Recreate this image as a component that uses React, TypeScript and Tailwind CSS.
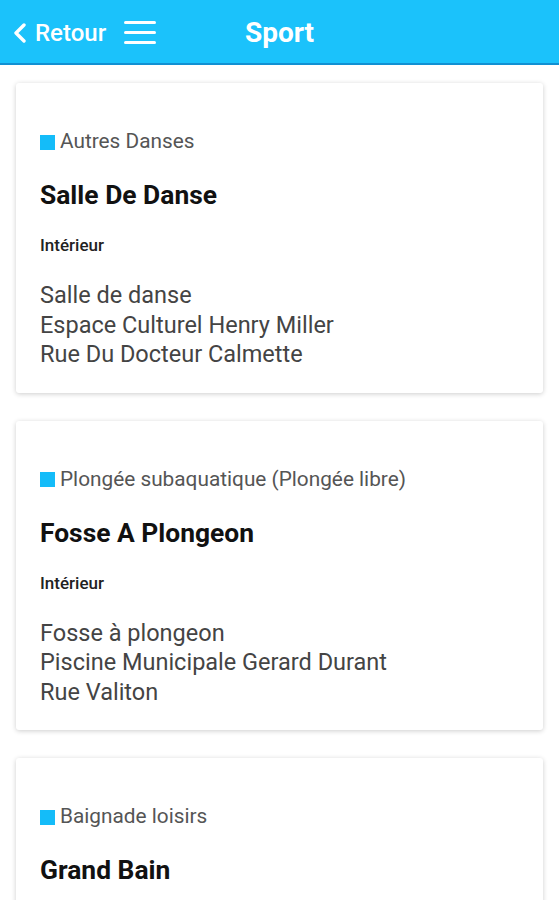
const PLACES = [
  {
    category: 'Autres Danses',
    name: 'Salle De Danse',
    kind: 'Intérieur',
    address: ['Salle de danse', 'Espace Culturel Henry Miller', 'Rue Du Docteur Calmette'],
  },
  {
    category: 'Plongée subaquatique (Plongée libre)',
    name: 'Fosse A Plongeon',
    kind: 'Intérieur',
    address: ['Fosse à plongeon', 'Piscine Municipale Gerard Durant', 'Rue Valiton'],
  },
  {
    category: 'Baignade loisirs',
    name: 'Grand Bain',
    kind: 'Intérieur',
    address: ['Grand bain', 'Piscine Municipale Gerard Durant', 'Rue Valiton'],
  },
];

function Header() {
  return (
    <header className="relative h-[65px] bg-[#1bc2fb] border-b-2 border-[#1290d2] flex items-center text-white pt-[2px]">
      <button className="flex items-center pl-[12px]">
        <svg width="15" height="20" viewBox="0 0 15 20" fill="none">
          <polyline points="12,2 4,10 12,18" stroke="white" strokeWidth="3.4" strokeLinecap="round" strokeLinejoin="round" />
        </svg>
        <span className="ml-[8px] text-[24px] font-medium leading-none">Retour</span>
      </button>
      <div className="ml-[18px] flex flex-col gap-[7px]">
        <span className="block w-[32px] h-[3px] bg-white rounded-sm" />
        <span className="block w-[32px] h-[3px] bg-white rounded-sm" />
        <span className="block w-[32px] h-[3px] bg-white rounded-sm" />
      </div>
      <h1 className="absolute left-0 right-0 text-center text-[28px] font-bold pointer-events-none">Sport</h1>
    </header>
  );
}

export default function App() {
  return (
    <div className="bg-white font-['Roboto',sans-serif] overflow-hidden h-[900px]">
      <Header />
      <main className="px-[16px] pt-[18px] flex flex-col gap-[28px]">
        {PLACES.map((p) => (
          <section
            key={p.name}
            className="bg-white rounded-[3px] shadow-[0_1px_5px_rgba(0,0,0,0.2)] px-[24px] pt-[47px] pb-[23px]"
          >
            <div className="flex items-center h-[24px]">
              <span className="w-[15px] h-[15px] bg-[#14bcf9] mr-[5px] shrink-0" />
              <span className="text-[20.8px] text-[#555555]">{p.category}</span>
            </div>
            <h2 className="mt-[25px] text-[26.4px] leading-[32px] font-bold text-[#111111]">{p.name}</h2>
            <div className="mt-[23px] text-[17px] leading-[22px] font-medium text-[#222222]">{p.kind}</div>
            <div className="mt-[25px] text-[23.5px] leading-[29.5px] text-[#444444]">
              {p.address.map((l) => (
                <div key={l}>{l}</div>
              ))}
            </div>
          </section>
        ))}
      </main>
    </div>
  );
}
